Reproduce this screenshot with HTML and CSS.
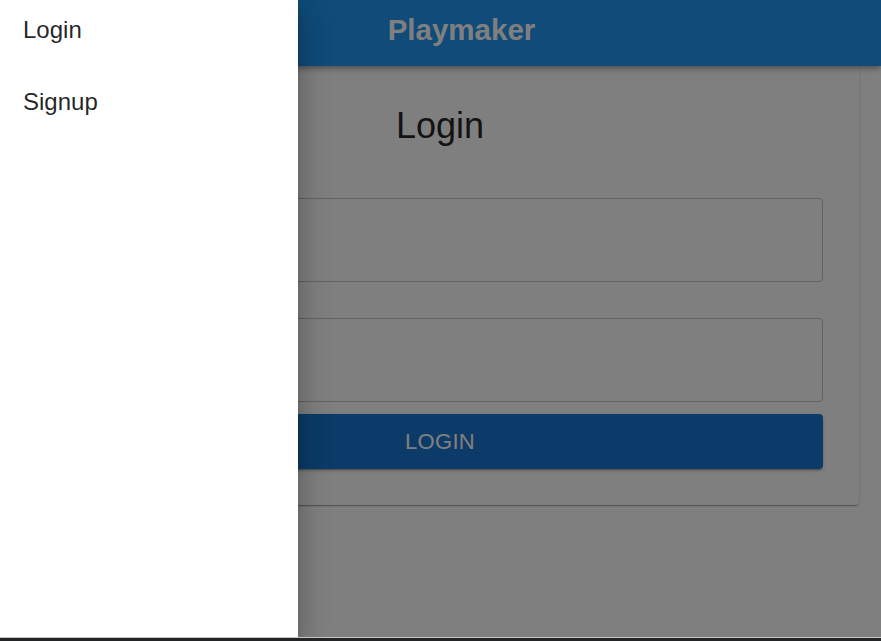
FILE: index.html
```html
<!DOCTYPE html>
<html lang="en">
<head>
<meta charset="utf-8">
<title>Playmaker</title>
<link rel="stylesheet" href="styles.css">
</head>
<body>
<div class="viewport">
  <header class="appbar">
    <button class="menu-btn" aria-label="menu">
      <svg viewBox="0 0 24 24" width="24" height="24"><path d="M3 18h18v-2H3v2zm0-5h18v-2H3v2zm0-7v2h18V6H3z" fill="#fff"/></svg>
    </button>
    <h1 class="brand">Playmaker</h1>
  </header>
  <main class="content">
    <section class="card">
      <h2 class="card-title">Login</h2>
      <form class="form">
        <input class="field" type="email" aria-label="Email">
        <input class="field" type="password" aria-label="Password">
        <button class="submit" type="button">Login</button>
      </form>
    </section>
  </main>
  <div class="backdrop"></div>
  <nav class="drawer">
    <ul class="nav-list">
      <li class="nav-item">Login</li>
      <li class="nav-item">Signup</li>
    </ul>
  </nav>
</div>
<div class="chrome"></div>
</body>
</html>
```
FILE: styles.css
```css
* { box-sizing: border-box; }
html, body {
  margin: 0;
  padding: 0;
  height: 641px;
  overflow: hidden;
  background: #fff;
  font-family: "Liberation Sans", Arial, sans-serif;
}
.viewport {
  position: relative;
  height: 637px;
  overflow: hidden;
}
.appbar {
  position: relative;
  z-index: 2;
  height: 66px;
  display: flex;
  align-items: flex-start;
  padding: 0 24px;
  background: #2196f3;
  box-shadow: 0 2px 4px -1px rgba(0,0,0,.2), 0 4px 5px 0 rgba(0,0,0,.14), 0 1px 10px 0 rgba(0,0,0,.12);
}
.menu-btn {
  width: 26px;
  height: 60px;
  margin-right: 16px;
  padding: 0;
  border: 0;
  background: transparent;
  display: flex;
  align-items: center;
}
.brand {
  flex: 1;
  margin: 0;
  text-align: center;
  font-size: 29.5px;
  font-weight: 700;
  line-height: 60px;
  color: #fff;
}
.content {
  padding: 0 22px 0 21px;
}
.card {
  position: relative;
  z-index: 1;
  margin-top: -10px;
  padding: 49px 36px 36px;
  background: #fff;
  border-radius: 4px;
  box-shadow: 0 2px 1px -1px rgba(0,0,0,.2), 0 1px 1px 0 rgba(0,0,0,.14), 0 1px 3px 0 rgba(0,0,0,.12);
}
.card-title {
  margin: 0 0 51px;
  text-align: center;
  font-size: 36px;
  font-weight: 400;
  line-height: 42px;
  color: rgba(0,0,0,.87);
}
.form {
  display: flex;
  flex-direction: column;
}
.field {
  height: 84px;
  margin: 0 0 36px;
  border: 1px solid rgba(0,0,0,.23);
  border-radius: 4px;
  background: transparent;
  font: inherit;
}
.field + .field { margin-bottom: 12px; }
.submit {
  height: 55px;
  border: 0;
  border-radius: 4px;
  background: #1976d2;
  color: #fff;
  font-family: inherit;
  font-size: 22px;
  letter-spacing: 0.3px;
  text-transform: uppercase;
  box-shadow: 0 3px 1px -2px rgba(0,0,0,.2), 0 2px 2px 0 rgba(0,0,0,.14), 0 1px 5px 0 rgba(0,0,0,.12);
}
.backdrop {
  position: absolute;
  inset: 0;
  z-index: 5;
  background: rgba(0,0,0,.5);
}
.drawer {
  position: absolute;
  top: 0;
  left: 0;
  bottom: 0;
  z-index: 6;
  width: 298px;
  background: #fff;
  box-shadow: 0 8px 10px -5px rgba(0,0,0,.2), 0 16px 24px 2px rgba(0,0,0,.14), 0 6px 30px 5px rgba(0,0,0,.12);
}
.nav-list {
  list-style: none;
  margin: 0;
  padding: 0;
}
.nav-item {
  padding: 12px 23px 24px;
  font-size: 24px;
  line-height: 36px;
  color: rgba(0,0,0,.87);
}
.chrome {
  height: 4px;
  border-top: 1px solid #c4c4c4;
  background: #232427;
}
```
